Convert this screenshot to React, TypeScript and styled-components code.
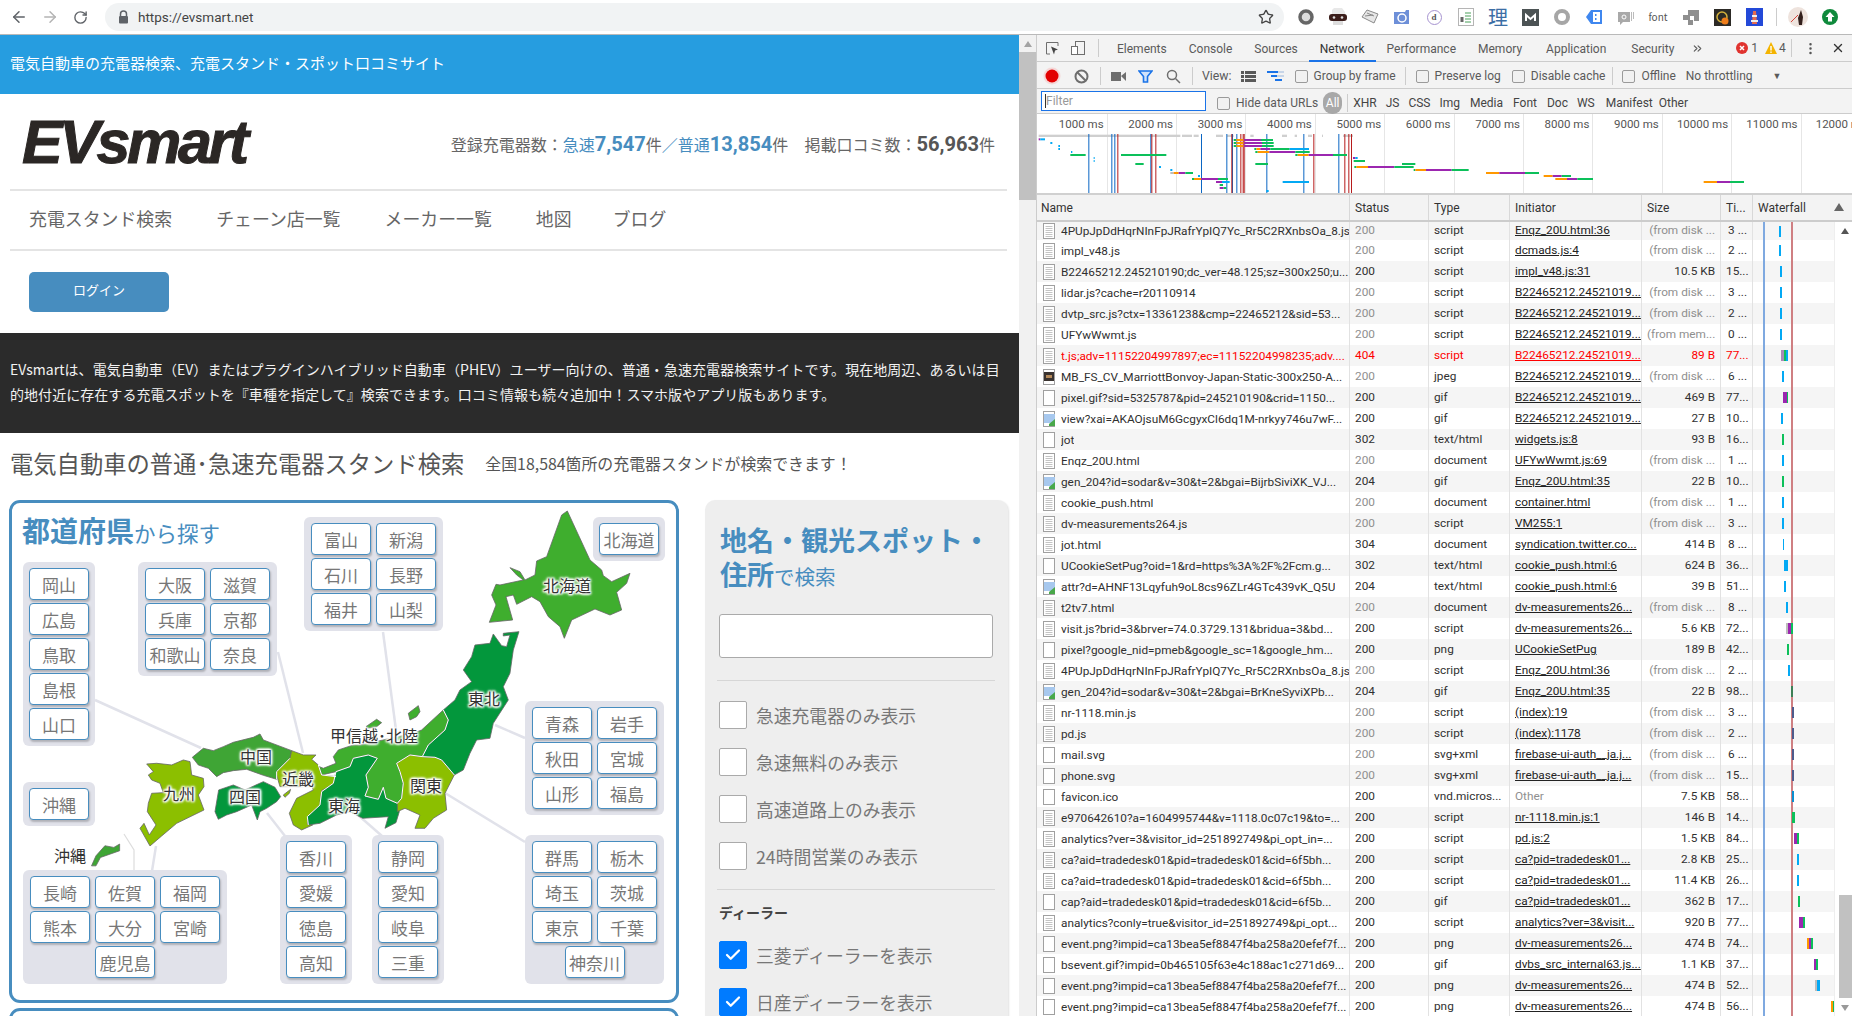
import React from 'react';
import styled, { createGlobalStyle, css } from 'styled-components';
import { ArrowLeft, ArrowRight, RotateCw, Star, ChevronsRight, MoreVertical, X, Check } from 'lucide-react';

const Global = createGlobalStyle`
  html, body { margin: 0; padding: 0; background: #fff; overflow: hidden; }
  * { box-sizing: border-box; }
  #root { height: 1016px; width: 1852px; overflow: hidden; font-family: Roboto, "Noto Sans CJK JP", sans-serif; }
`;

const BLUE = '#478dbf';
const PAGE_FONT = `"Noto Sans CJK JP", Roboto, sans-serif`;

/* ---------- browser chrome ---------- */
const Chrome = styled.header`
  height: 35px; border-bottom: 1px solid #b9b9b9; display: flex; align-items: center; background: #fff;
`;
const NavBtn = styled.span<{ $c?: string; $w: number }>`
  width: ${p => p.$w}px; display: flex; justify-content: center; color: ${p => p.$c || '#5f6368'};
`;
const UrlPill = styled.div`
  margin-left: 6px; width: 1179px; height: 28px; border-radius: 14px; background: #f1f3f4; display: flex; align-items: center;
  padding: 0 10px 0 13px; font-size: 13.5px; color: #444; gap: 9px;
`;
const UrlText = styled.span` flex: 1; `;
const Exts = styled.div` margin-left: 6px; display: flex; align-items: center; `;
const Ext = styled.span`
  width: 32px; height: 30px; display: flex; align-items: center; justify-content: center;
`;
const ExtText = styled.span<{ $c: string; $s: number }>`
  color: ${p => p.$c}; font-size: ${p => p.$s}px; line-height: 1; font-family: ${PAGE_FONT};
`;
const ExtBadge = styled.span`
  width: 15px; height: 15px; border: 1px solid #a693d0; border-radius: 50%; display: flex; align-items: center; justify-content: center;
  font: 700 9px "Liberation Serif", serif; color: #555;
`;
const ExtSep = styled.span` width: 1px; height: 18px; background: #ccc; margin: 0 5px 0 6px; `;

/* ---------- page ---------- */
const Main = styled.div` display: flex; height: 981px; `;
const Page = styled.main`
  width: 1019px; overflow: hidden; font-family: ${PAGE_FONT}; color: #555; background: #fff;
`;
const PageBar = styled.div`
  width: 17px; background: #f1f1f1; position: relative; flex: none;
  &::before { content: ''; position: absolute; left: 5px; top: 6px; border: 4px solid transparent; border-top: 0; border-bottom: 6px solid #a3a3a3; }
`;
const PageThumb = styled.div` margin-top: 17px; height: 148px; background: #c1c1c1; `;
const Banner = styled.div`
  height: 59px; background: #269de0; color: #fff; font-size: 15px; display: flex; align-items: center; padding: 0 0 4px 10px;
`;
const Masthead = styled.div`
  height: 97px; margin: 0 12px 0 10px; border-bottom: 2px solid #e4e4e4; display: flex; align-items: center; justify-content: space-between;
  padding: 0 12px 0 12px;
`;
const Logo = styled.div`
  font-family: "Liberation Sans", sans-serif; font-weight: 700; font-style: italic; font-size: 61px; letter-spacing: -3.4px; line-height: 1;
  color: #2b2725; -webkit-text-stroke: 1px #2b2725; padding-top: 1px;
`;
const Stats = styled.div` font-size: 16px; color: #666; display: flex; align-items: baseline; white-space: nowrap; padding-top: 4px; `;
const StatNum = styled.b<{ $dark?: boolean }>`
  font-family: Roboto, sans-serif; font-size: 20.1px; font-weight: 700; color: ${p => (p.$dark ? '#555' : BLUE)};
`;
const StatBlue = styled.span` color: ${BLUE}; `;
const StatGap = styled.span` width: 16px; `;
const Nav = styled.nav`
  height: 60px; margin: 0 12px 0 10px; border-bottom: 2px solid #e4e4e4; display: flex; align-items: center; gap: 44px; padding: 0 0 4px 19px;
  font-size: 17.9px; color: #666;
  span:last-child { margin-left: -3px; }
`;
const LoginRow = styled.div` height: 82px; padding: 21px 0 0 29px; `;
const Login = styled.button`
  width: 140px; height: 40px; border: 0; border-radius: 5px; background: ${BLUE}; color: #fff; font: 13px ${PAGE_FONT}; padding: 0 0 6px;
`;
const Intro = styled.p`
  margin: 0; height: 100px; background: #2b2b2b; color: #f2f2f2; font-size: 14px; line-height: 25px; padding: 24px 0 0 10px; letter-spacing: .05px; white-space: nowrap;
`;
const Heading = styled.div` height: 67px; padding: 0 0 7px 10px; display: flex; align-items: center; gap: 21px; `;
const H2 = styled.h2` margin: 0; font-size: 23.3px; font-weight: 400; color: #555; white-space: nowrap; `;
const H2Sub = styled.span` font-size: 15.9px; color: #555; white-space: nowrap; `;
const Panels = styled.div` display: flex; align-items: flex-start; padding-left: 9px; gap: 26px; `;
const Left = styled.div` width: 670px; `;

const MapPanel = styled.section`
  position: relative; height: 503px; border: 3px solid ${BLUE}; border-radius: 11px; background: #fff;
`;
const NextPanel = styled.div`
  height: 30px; margin-top: 5px; border: 3px solid ${BLUE}; border-radius: 11px;
`;
const MapTitle = styled.h3`
  margin: 0; position: absolute; left: 10px; top: 8px; color: ${BLUE}; font-size: 28px; font-weight: 700; white-space: nowrap; z-index: 2; line-height: 38px;
`;
const MapThin = styled.span` font-size: 21.5px; font-weight: 400; `;
const TitleThin = styled.span` font-size: 20.5px; font-weight: 400; `;
const MapArt = styled.svg` position: absolute; left: 0; top: 0; `;
const Group = styled.div<{ $x: number; $y: number; $cols: number }>`
  position: absolute; left: ${p => p.$x - 12}px; top: ${p => p.$y - 503}px; display: grid;
  grid-template-columns: repeat(${p => p.$cols}, 60px); gap: 3px 5px; padding: 6px 7px; background: #e1e2ea; border-radius: 6px;
  ${p => p.$cols === 1 && css` padding: 6px; `}
`;
const Pref = styled.a<{ $place?: string }>`
  height: 32px; background: #fff; border: 1.5px solid ${BLUE}; border-radius: 4px; box-shadow: 1px 2px 2px rgba(0,0,0,.22);
  display: flex; align-items: center; justify-content: center; font-size: 17px; color: #777; white-space: nowrap; line-height: 1;
  ${p => p.$place === 'center' && css` grid-column: 1 / -1; width: 60px; justify-self: center; `}
  ${p => p.$place === 'second' && css` grid-column: 2; `}
`;
const RegionLabel = styled.span<{ $x: number; $y: number }>`
  position: absolute; left: ${p => p.$x - 12}px; top: ${p => p.$y - 505}px; transform: translate(-50%, -50%); font-size: 16px; color: #333; white-space: nowrap; line-height: 1;
  text-shadow: 0 0 2px #fff, 0 0 3px #fff, 0 0 3px #fff, 0 0 4px #fff, 1px 1px 2px #fff, -1px -1px 2px #fff, 1px -1px 2px #fff, -1px 1px 2px #fff;
`;

const Side = styled.aside`
  width: 303px; height: 520px; background: #eee; border-radius: 10px 10px 0 0; padding: 23px 14px 0 14px; box-shadow: 1px 1px 2px rgba(0,0,0,.12);
`;
const SideTitle = styled.h3`
  margin: 0 0 21px 1px; font-size: 27px; line-height: 34px; color: ${BLUE}; font-weight: 700; white-space: nowrap;
`;
const SearchBox = styled.div` height: 44px; background: #fff; border: 1px solid #aaa; border-radius: 3px; width: 274px; `;
const Rule = styled.hr<{ $mt: number }>` margin: ${p => p.$mt}px 0 0 -2px; width: 278px; border: 0; border-top: 1px solid #d6d6d6; `;
const Opts = styled.div<{ $mt: number }>` margin-top: ${p => p.$mt}px; display: flex; flex-direction: column; gap: 19px; `;
const Opt = styled.label` display: flex; align-items: center; height: 28px; gap: 9px; font-size: 17.8px; color: #777; white-space: nowrap; `;
const OptBox = styled.span<{ $on?: boolean }>`
  width: 28px; height: 28px; flex: none; border-radius: 2px; display: flex; align-items: center; justify-content: center; color: #fff;
  background: ${p => (p.$on ? '#007bff' : '#fff')}; border: 1px solid ${p => (p.$on ? '#007bff' : '#aaa')};
`;
const DealerTitle = styled.div` margin-top: 12px; font-size: 14px; font-weight: 700; color: #444; line-height: 20px; `;

/* ---------- devtools ---------- */
const Dev = styled.section`
  width: 816px; flex: none; border-left: 1px solid #ccc; background: #fff; color: #5a5a5a; font-size: 12px; font-family: Roboto, "Noto Sans", sans-serif;
  display: flex; flex-direction: column; overflow: hidden;
`;
const DevBar = styled.div<{ $h: number; $pt?: number }>`
  height: ${p => p.$h}px; flex: none; display: flex; align-items: center; border-bottom: 1px solid #ccc; background: #f3f3f3; white-space: nowrap;
  padding-top: ${p => p.$pt ?? 0}px;
`;
const Cell = styled.span<{ $w: number; $ml?: number }>`
  width: ${p => p.$w}px; flex: none; display: flex; align-items: center; justify-content: center; margin-left: ${p => p.$ml ?? 0}px;
`;
const Sep = styled.span<{ $ml?: number; $mr?: number }>`
  width: 1px; height: 18px; background: #ccc; margin-left: ${p => p.$ml ?? 0}px; margin-right: ${p => p.$mr ?? 0}px; flex: none;
`;
const Tab = styled.span<{ $on?: boolean; $ml?: number }>`
  padding: 0 11px; height: 27px; line-height: 28px; flex: none; font-size: 12px; margin-left: ${p => p.$ml ?? 0}px;
  ${p => p.$on && css` color: #333; border-bottom: 2px solid #1a73e8; `}
`;
const Txt = styled.span<{ $ml?: number; $c?: string; $s?: number }>`
  margin-left: ${p => p.$ml ?? 0}px; flex: none; ${p => p.$c && css` color: ${p.$c}; `} ${p => p.$s && css` font-size: ${p.$s}px; `}
`;
const Cb = styled.span<{ $ml?: number }>`
  width: 13px; height: 13px; flex: none; border: 1px solid #9a9a9a; border-radius: 2px; background: #f1f1f1; margin-left: ${p => p.$ml ?? 0}px; margin-right: 6px;
`;
const FilterInput = styled.span`
  margin: -4px 0 0 4px; width: 165px; height: 20px; border: 1px solid #1a73e8; background: #fff; color: #999; padding-left: 4px; line-height: 18px; flex: none;
  box-shadow: inset 1px 0 0 #fff; position: relative;
  &::before { content: ''; position: absolute; left: 3px; top: 2px; height: 14px; width: 1px; background: #333; }
`;
const Pill = styled.span`
  margin-left: 5px; width: 19px; height: 22px; border-radius: 9px; background: #a8a8a8; color: #fff; text-align: center; line-height: 22px; flex: none;
`;
const FilterType = styled.span<{ $ml: number }>` margin-left: ${p => p.$ml}px; flex: none; color: #444; `;

const Overview = styled.div` height: 81px; flex: none; position: relative; border-bottom: 2px solid #d0d0d0; display: flex; padding-left: 1px; overflow: hidden; `;
const Tick = styled.div<{ $w: number }>`
  width: ${p => p.$w}px; flex: none; border-right: 1px solid #e6e6e6; padding: 3px 3px 0 0; font-size: 11.5px; color: #555; white-space: nowrap; height: 80px;
  display: flex; justify-content: flex-end;
`;
const OverviewChart = styled.svg` position: absolute; left: 0; top: 16px; `;

const COLS = css` display: grid; grid-template-columns: 313px 79px 81px 132px 79px 32px 81px; `;
const HeadRow = styled.div`
  height: 27px; flex: none; background: #f3f3f3; border-bottom: 2px solid #ccc; display: grid; grid-template-columns: 313px 79px 81px 132px 79px 32px 99px;
  color: #333;
`;
const HeadCell = styled.div`
  padding-left: 5px; line-height: 27px; border-right: 1px solid #d8d8d8; overflow: hidden; white-space: nowrap; position: relative;
  &:first-child { padding-left: 4px; }
  &:last-child { border-right: 0; }
`;
const SortArrow = styled.span`
  position: absolute; right: 8px; top: 8px; border: 5px solid transparent; border-top: 0; border-bottom: 8px solid #666;
`;
const TableWrap = styled.div` flex: 1; display: flex; min-height: 0; overflow: hidden; `;
const Rows = styled.div` width: 797px; flex: none; font-size: 11.8px; `;
const Row = styled.div<{ $alt: boolean; $short?: boolean; $err?: boolean }>`
  ${COLS}
  height: ${p => (p.$short ? 18 : 21)}px; background: ${p => (p.$alt ? '#f5f5f5' : '#fff')}; color: ${p => (p.$err ? '#f00' : '#303030')}; line-height: ${p => (p.$short ? 16 : 20)}px;
`;
const TCell = styled.div<{ $gray?: boolean; $right?: boolean; $link?: boolean; $err?: boolean }>`
  padding: 0 5px; border-right: 1px solid #e2e2e2; overflow: hidden; white-space: nowrap;
  ${p => p.$gray && css` color: #8f8f8f; `}
  ${p => p.$right && css` text-align: right; `}
  ${p => p.$link && css` text-decoration: underline; color: ${p.$err ? '#f00' : '#222'}; `}
`;
const NameCell = styled(TCell)` padding: 0 0 0 6px; display: flex; align-items: center; gap: 5px; `;
const NameText = styled.span` overflow: hidden; `;
const Waterfall = styled.div`
  position: relative; overflow: hidden;
  &::before { content: ''; position: absolute; left: 10px; top: 0; bottom: 0; width: 2px; background: #7fa9e0; }
  &::after { content: ''; position: absolute; left: 38px; top: 0; bottom: 0; width: 2px; background: #cf7f82; }
`;
const Bar = styled.i`
  position: absolute; top: 50%; height: 11px; margin-top: -5.5px; z-index: 1;
`;
const DevScroll = styled.div` width: 18px; flex: none; background: #fff; border-left: 1px solid #eee; position: relative; `;
const ThumbDev = styled.div` position: absolute; left: 4px; right: 0; top: 673px; height: 103px; background: #c1c1c1; `;
const ArrowUp = styled.span` position: absolute; left: 6px; top: 6px; border: 4px solid transparent; border-top: 0; border-bottom: 6px solid #555; `;
const ArrowDown = styled.span` position: absolute; left: 6px; bottom: 5px; border: 4px solid transparent; border-bottom: 0; border-top: 6px solid #999; `;

/* ---------- data ---------- */
type BarT = [number, number, string];
const g = '#0cc05a', b = '#03a9f4', p = '#9c27b0', o = '#ff9800', n = '#4d5b8c', y = '#bdbdbd';
type R = { n: string; ic: 'doc' | 'blank' | 'img' | 'jpg'; s: string; sg?: boolean; t: string; i: string; il?: boolean; z: string; zg?: boolean; m: string; e?: boolean; w: BarT[] };
const disk = '(from disk ...';
const B22 = 'B22465212.24521019...';
const DV = 'dv-measurements26...';
const data: R[] = [
  { n: '4PUpJpDdHqrNInFpJRafrYpIQ7Yc_Rr5C2RXnbsOa_8.js', ic: 'doc', s: '200', sg: true, t: 'script', i: 'Enqz_20U.html:36', z: disk, zg: true, m: '3 ...', w: [[1778.6, 2, b]] },
  { n: 'impl_v48.js', ic: 'doc', s: '200', sg: true, t: 'script', i: 'dcmads.js:4', z: disk, zg: true, m: '2 ...', w: [[1778.6, 2, b]] },
  { n: 'B22465212.245210190;dc_ver=48.125;sz=300x250;u...', ic: 'doc', s: '200', t: 'script', i: 'impl_v48.js:31', z: '10.5 KB', m: '15...', w: [[1780, 2, b]] },
  { n: 'lidar.js?cache=r20110914', ic: 'doc', s: '200', sg: true, t: 'script', i: B22, z: disk, zg: true, m: '3 ...', w: [[1780, 2, b]] },
  { n: 'dvtp_src.js?ctx=13361238&cmp=22465212&sid=53...', ic: 'doc', s: '200', sg: true, t: 'script', i: B22, z: disk, zg: true, m: '2 ...', w: [[1780, 2, b]] },
  { n: 'UFYwWwmt.js', ic: 'doc', s: '200', sg: true, t: 'script', i: B22, z: '(from mem...', zg: true, m: '0 ...', w: [[1780, 2, b]] },
  { n: 't.js;adv=11152204997897;ec=11152204998235;adv....', ic: 'doc', s: '404', e: true, t: 'script', i: B22, z: '89 B', m: '77...', w: [[1781, 3, '#a989b5'], [1784, 2, g], [1786, 2, b]] },
  { n: 'MB_FS_CV_MarriottBonvoy-Japan-Static-300x250-A...', ic: 'jpg', s: '200', sg: true, t: 'jpeg', i: B22, z: disk, zg: true, m: '6 ...', w: [[1781.5, 2, b]] },
  { n: 'pixel.gif?sid=5325787&pid=245210190&crid=1150...', ic: 'blank', s: '200', t: 'gif', i: B22, z: '469 B', m: '77...', w: [[1783, 4, p], [1787, 1, g]] },
  { n: 'view?xai=AKAOjsuM6GcgyxCl6dq1M-nrkyy746u7wF...', ic: 'img', s: '200', t: 'gif', i: B22, z: '27 B', m: '10...', w: [[1781, 2, b]] },
  { n: 'jot', ic: 'blank', s: '302', t: 'text/html', i: 'widgets.js:8', z: '93 B', m: '16...', w: [[1782, 1.5, g]] },
  { n: 'Enqz_20U.html', ic: 'doc', s: '200', sg: true, t: 'document', i: 'UFYwWwmt.js:69', z: disk, zg: true, m: '1 ...', w: [[1781.5, 2, b]] },
  { n: 'gen_204?id=sodar&v=30&t=2&bgai=BijrbSiviXK_VJ...', ic: 'img', s: '204', t: 'gif', i: 'Enqz_20U.html:35', z: '22 B', m: '10...', w: [[1782, 1.5, g]] },
  { n: 'cookie_push.html', ic: 'doc', s: '200', sg: true, t: 'document', i: 'container.html', z: disk, zg: true, m: '1 ...', w: [[1781.5, 2, b]] },
  { n: 'dv-measurements264.js', ic: 'doc', s: '200', sg: true, t: 'script', i: 'VM255:1', z: disk, zg: true, m: '3 ...', w: [[1781.5, 2, b]] },
  { n: 'jot.html', ic: 'doc', s: '304', t: 'document', i: 'syndication.twitter.co...', z: '414 B', m: '8 ...', w: [[1782.5, 1.5, b]] },
  { n: 'UCookieSetPug?oid=1&rd=https%3A%2F%2Fcm.g...', ic: 'blank', s: '302', t: 'text/html', i: 'cookie_push.html:6', z: '624 B', m: '36...', w: [[1784, 4, b]] },
  { n: 'attr?d=AHNF13Lqyfuh9oL8cs96ZLr4GTc439vK_Q5U', ic: 'img', s: '204', t: 'text/html', i: 'cookie_push.html:6', z: '39 B', m: '51...', w: [[1784, 2, b]] },
  { n: 't2tv7.html', ic: 'doc', s: '200', sg: true, t: 'document', i: DV, z: disk, zg: true, m: '8 ...', w: [[1786, 2, b]] },
  { n: 'visit.js?brid=3&brver=74.0.3729.131&bridua=3&bd...', ic: 'doc', s: '200', t: 'script', i: DV, z: '5.6 KB', m: '72...', w: [[1785.5, 3, y], [1787.5, 3, p], [1790.5, 2, g]] },
  { n: 'pixel?google_nid=pmeb&google_sc=1&google_hm...', ic: 'blank', s: '200', t: 'png', i: 'UCookieSetPug', z: '189 B', m: '42...', w: [[1787, 1.5, g]] },
  { n: '4PUpJpDdHqrNInFpJRafrYpIQ7Yc_Rr5C2RXnbsOa_8.js', ic: 'doc', s: '200', sg: true, t: 'script', i: 'Enqz_20U.html:36', z: disk, zg: true, m: '2 ...', w: [[1788, 2, b]] },
  { n: 'gen_204?id=sodar&v=30&t=2&bgai=BrKneSyviXPb...', ic: 'img', s: '204', t: 'gif', i: 'Enqz_20U.html:35', z: '22 B', m: '98...', w: [[1791, 2, '#3d7f55']] },
  { n: 'nr-1118.min.js', ic: 'doc', s: '200', sg: true, t: 'script', i: '(index):19', z: disk, zg: true, m: '3 ...', w: [[1791.5, 2, n]] },
  { n: 'pd.js', ic: 'doc', s: '200', sg: true, t: 'script', i: '(index):1178', z: disk, zg: true, m: '2 ...', w: [[1791.5, 2, n]] },
  { n: 'mail.svg', ic: 'blank', s: '200', sg: true, t: 'svg+xml', i: 'firebase-ui-auth__ja.j...', z: disk, zg: true, m: '6 ...', w: [[1791.5, 2, n]] },
  { n: 'phone.svg', ic: 'blank', s: '200', sg: true, t: 'svg+xml', i: 'firebase-ui-auth__ja.j...', z: disk, zg: true, m: '15...', w: [[1791.5, 2, n]] },
  { n: 'favicon.ico', ic: 'blank', s: '200', t: 'vnd.micros...', i: 'Other', il: true, z: '7.5 KB', m: '58...', w: [[1792, 2, '#0a8fd0']] },
  { n: 'e970642610?a=1604995744&v=1118.0c07c19&to=...', ic: 'doc', s: '200', t: 'script', i: 'nr-1118.min.js:1', z: '146 B', m: '14...', w: [[1792, 3, g]] },
  { n: 'analytics?ver=3&visitor_id=251892749&pi_opt_in=...', ic: 'doc', s: '200', t: 'script', i: 'pd.js:2', z: '1.5 KB', m: '84...', w: [[1794, 3, p], [1797, 2, g]] },
  { n: 'ca?aid=tradedesk01&pid=tradedesk01&cid=6f5bh...', ic: 'doc', s: '200', t: 'script', i: 'ca?pid=tradedesk01...', z: '2.8 KB', m: '25...', w: [[1797, 2, b]] },
  { n: 'ca?aid=tradedesk01&pid=tradedesk01&cid=6f5bh...', ic: 'doc', s: '200', t: 'script', i: 'ca?pid=tradedesk01...', z: '11.4 KB', m: '26...', w: [[1797, 2, b]] },
  { n: 'cap?aid=tradedesk01&pid=tradedesk01&cid=6f5b...', ic: 'blank', s: '200', t: 'gif', i: 'ca?pid=tradedesk01...', z: '362 B', m: '17...', w: [[1798, 1.5, g]] },
  { n: 'analytics?conly=true&visitor_id=251892749&pi_opt...', ic: 'doc', s: '200', t: 'script', i: 'analytics?ver=3&visit...', z: '920 B', m: '77...', w: [[1799, 4, p], [1803, 2, g]] },
  { n: 'event.png?impid=ca13bea5ef8847f4ba258a20efef7f...', ic: 'blank', s: '200', t: 'png', i: DV, z: '474 B', m: '74...', w: [[1807, 2, o], [1809, 2, p], [1811, 2, g]] },
  { n: 'bsevent.gif?impid=0b465105f63e4c188ac1c271d69...', ic: 'blank', s: '200', t: 'gif', i: 'dvbs_src_internal63.js...', z: '1.1 KB', m: '37...', w: [[1814, 2, p], [1815.5, 2, g]] },
  { n: 'event.png?impid=ca13bea5ef8847f4ba258a20efef7f...', ic: 'blank', s: '200', t: 'png', i: DV, z: '474 B', m: '52...', w: [[1815, 2, y], [1817, 3, b]] },
  { n: 'event.png?impid=ca13bea5ef8847f4ba258a20efef7f...', ic: 'blank', s: '200', t: 'png', i: DV, z: '474 B', m: '56...', w: [[1831, 3, o], [1833, 1, g]] },
];

const FileIcon = ({ k }: { k: R['ic'] }) => (
  <svg width="13" height="16" viewBox="0 0 13 16" style={{ flex: 'none' }}>
    <rect x=".5" y=".5" width="11" height="15" fill="#fff" stroke="#a0a0a0" />
    {k === 'doc' && [3, 5, 7, 9, 11, 13].map(v => <rect key={v} x="2.5" y={v} width="7" height="1" fill="#c4c4c4" />)}
    {k === 'img' && <><rect x="1" y="3" width="11" height="9" fill="#a7c8ee" /><path d="M6 13l6-5v7H6z" fill="#49a84a" /></>}
    {k === 'jpg' && <><rect x="1" y="3" width="10" height="9" fill="#3a3330" /><rect x="3" y="6" width="6" height="3" fill="#b58a5a" /></>}
  </svg>
);

const groups: { x: number; y: number; cols: number; items: string[]; last?: string }[] = [
  { x: 23, y: 562, cols: 1, items: ['岡山', '広島', '鳥取', '島根', '山口'] },
  { x: 138, y: 562, cols: 2, items: ['大阪', '滋賀', '兵庫', '京都', '和歌山', '奈良'] },
  { x: 304, y: 517, cols: 2, items: ['富山', '新潟', '石川', '長野', '福井', '山梨'] },
  { x: 593, y: 517, cols: 1, items: ['北海道'] },
  { x: 23, y: 782, cols: 1, items: ['沖縄'] },
  { x: 23, y: 870, cols: 3, items: ['長崎', '佐賀', '福岡', '熊本', '大分', '宮崎', '鹿児島'], last: 'second' },
  { x: 280, y: 835, cols: 1, items: ['香川', '愛媛', '徳島', '高知'] },
  { x: 372, y: 835, cols: 1, items: ['静岡', '愛知', '岐阜', '三重'] },
  { x: 525, y: 835, cols: 2, items: ['群馬', '栃木', '埼玉', '茨城', '東京', '千葉', '神奈川'], last: 'center' },
  { x: 525, y: 701, cols: 2, items: ['青森', '岩手', '秋田', '宮城', '山形', '福島'] },
];
const labels: [string, number, number][] = [
  ['北海道', 567, 587], ['東北', 484, 700], ['甲信越･北陸', 374, 737], ['中国', 256, 758], ['近畿', 298, 780],
  ['九州', 179, 795], ['四国', 245, 798], ['東海', 344, 807], ['関東', 426, 787], ['沖縄', 70, 857],
];

const LIME = '#8cbf00', MID = '#3fae2e', DARK = '#03973c', MID2 = '#3fa535';
const regions: [string, string][] = [
  [MID2, '217,772 250,745 280,752 310,740 340,727 400,712 420,702 430,720 515,752 510,775 470,815 470,838 430,826 380,808 340,812 310,818 290,830 265,805 235,795'],
  [DARK, '296,870 340,855 375,870 430,845 465,862 482,890 470,905 440,925 420,935 412,960 395,915 350,935 320,945 295,958 285,935'],
  [LIME, '80,792 110,790 155,795 190,780 210,785 215,825 250,835 252,860 235,885 252,930 170,970 125,1008 90,1038 60,985 72,970 88,1005 108,975 82,935 85,910 95,880 130,878 120,850 95,840 85,825 100,815'],
  [LIME, '470,815 510,775 515,752 550,765 588,765 575,778 595,795 605,825 648,830 640,852 605,872 600,905 608,912 585,935 565,950 562,972 578,975 545,990 520,975 508,940 530,895 580,870 575,860 480,860 470,825'],
  [LIME, '490,885 512,868 508,880 495,892'],
  [MID, '605,825 598,800 610,805 648,790 640,770 655,750 700,735 720,735 880,700 905,690 970,630 985,660 975,690 925,735 907,770 870,765 830,790 840,815 850,850 845,895 832,910 798,895 790,862 775,898 735,888 745,862 738,825 772,775 745,765 700,775 690,800 648,815'],
  [MID, '865,640 895,617 900,635 890,650 870,660'],
  [MID, '738,680 770,658 785,668 770,680 745,685'],
  [DARK, '648,815 690,800 700,775 745,765 772,775 738,825 745,862 735,888 775,898 790,862 798,895 832,910 838,935 828,968 795,985 805,950 728,955 690,935 650,945 600,970 565,975 562,950 600,915 605,875 640,850'],
  [LIME, '830,790 870,765 907,770 945,772 965,780 1003,825 975,880 980,930 940,955 915,985 885,985 900,945 855,925 832,935 832,910 845,895 850,850 840,815'],
  [DARK, '1120,402 1145,437 1160,440 1170,405 1150,408 1150,400 1197,395 1180,450 1170,520 1150,560 1165,600 1120,670 1110,715 1070,720 1050,760 1030,810 1003,825 965,780 945,772 907,770 925,735 975,690 985,660 970,630 1005,600 1020,570 1055,545 1030,510 1055,470 1065,435 1110,430'],
];
const seams = [
  '510,775 470,815 470,838', '648,830 605,825 595,795', '648,815 640,850 605,875 600,915 562,950 565,975',
  '648,815 690,800 700,775 745,765 772,775 738,825 745,862 735,888 775,898 790,862 798,895 832,910', '832,910 845,895 850,850 840,815 830,790 870,765 907,770',
  '907,770 925,735 975,690 985,660 970,630', '907,770 945,772 965,780 1003,825',
];
const HOKKAIDO = '262,18 330,165 365,195 370,212 395,230 450,205 440,235 410,262 425,315 390,330 345,312 275,345 253,400 240,365 205,335 180,290 155,275 110,298 100,270 78,275 98,345 28,352 48,300 35,270 48,238 60,240 130,225 110,210 90,188 120,200 135,225 165,210 170,168 200,155 245,30';
const lines: string[] = [
  '95,700 201,748', '278,652 303,753', '383,632 396,730', '495,725 525,738', '445,793 525,842', '267,813 285,836', '358,815 382,836', '156,846 152,871',
];

const JapanMap = () => (
  <MapArt width="664" height="497" viewBox="12 503 664 497">
    <g fill="none" stroke="#e1e2ea" strokeWidth="2.5">
      {lines.map(l => <polyline key={l} points={l} />)}
      <polyline points="124,834 134,850 134,871" stroke="#ddd" strokeWidth="1.2" />
    </g>
    <g transform="translate(120,500) scale(.3333)">
      <g stroke="#666" strokeWidth="2.4" strokeLinejoin="round">
        {regions.map(([c, pts]) => <polygon key={pts} fill={c} points={pts} />)}
      </g>
      <g fill="none" stroke="#fff" strokeWidth="3">
        {seams.map(s => <polyline key={s} points={s} />)}
      </g>
    </g>
    <g transform="translate(480,505) scale(.3333)">
      <polygon fill={MID} stroke="#666" strokeWidth="2.4" strokeLinejoin="round" points={HOKKAIDO} />
    </g>
    <g transform="translate(0,490) scale(.4464,.3356)">
      <polygon fill={MID2} stroke="#666" strokeWidth="2" points="205,1120 215,1090 235,1060 255,1065 268,1055 268,1075 225,1095 215,1120" />
    </g>
  </MapArt>
);

/* overview chart, units are 1/3 px */
const segs: [number, number, number, string][] = [
  [5, 10, 25, p], [10, 24, 25, b], [40, 46, 36, b], [64, 69, 45, b], [64, 69, 54, b], [102, 106, 63, b], [100, 146, 72, g], [252, 388, 72, g],
  [170, 173, 81, b], [170, 173, 90, b], [295, 320, 99, g], [366, 372, 108, b], [400, 406, 117, b], [400, 410, 126, y], [410, 425, 126, o], [425, 445, 126, p], [445, 468, 126, g],
  [483, 489, 135, b], [465, 471, 144, g], [471, 492, 144, o], [492, 543, 144, p], [543, 573, 144, g], [537, 555, 153, p], [555, 578, 153, b], [548, 558, 162, g], [548, 560, 171, p], [560, 568, 171, g],
  [590, 598, 27, g], [598, 620, 27, o], [620, 672, 27, p], [672, 708, 27, g], [590, 598, 36, g], [598, 620, 36, o], [620, 675, 36, p], [675, 710, 36, g], [590, 598, 45, g], [598, 620, 45, o], [620, 675, 45, p], [675, 710, 45, g],
  [652, 658, 54, g], [658, 670, 54, o], [670, 700, 54, p], [700, 758, 54, g], [758, 816, 54, b], [655, 662, 63, g], [662, 697, 63, o], [697, 775, 63, p], [775, 818, 63, g],
  [775, 782, 72, g], [782, 815, 72, o], [815, 888, 72, p], [888, 930, 72, g], [948, 955, 81, p], [955, 962, 81, b], [950, 984, 90, g], [655, 693, 99, g], [1095, 1135, 99, g],
  [952, 958, 108, g], [958, 993, 108, o], [993, 1072, 108, p], [1072, 1130, 108, g], [1130, 1135, 117, g], [1135, 1167, 117, o], [1167, 1244, 117, p], [1244, 1295, 117, g],
  [1347, 1387, 126, o], [1387, 1464, 126, p], [1464, 1506, 126, g], [1520, 1547, 135, o], [1547, 1574, 135, p], [1574, 1602, 135, g], [1555, 1590, 144, o], [1590, 1621, 144, p], [1621, 1668, 144, g],
  [737, 816, 153, b], [2000, 2040, 153, o], [2040, 2079, 153, p], [2079, 2121, 153, g], [688, 695, 180, b],
];
const grays: [number, number][] = [[5, 430], [435, 465], [470, 485], [537, 558], [570, 590], [640, 650], [735, 750], [773, 780], [813, 825], [855, 858], [918, 948]];
const vBlue = [154, 223, 232, 340, 492, 568, 585, 598, 688, 799, 904];
const vRed = [241, 343, 355, 583, 610, 617, 620, 829, 922, 934, 942];

const OverviewArt = () => (
  <OverviewChart width="816" height="64" viewBox="0 0 2448 192">
    {grays.map(([a, c]) => <rect key={a} x={a} y="14" width={c - a} height="7" fill="#cfcfcf" />)}
    {vBlue.map(v => <rect key={v} x={v} y="12" width="3" height="180" fill="#0b66c3" />)}
    {vRed.map(v => <rect key={v} x={v} y="12" width="3" height="180" fill="#b71c1c" />)}
    {segs.map(([a, c, yy, col]) => <rect key={`${a}-${yy}`} x={a} y={yy} width={c - a} height="6" fill={col} />)}
  </OverviewChart>
);

const Lock = () => (
  <svg width="11" height="14" viewBox="0 0 11 14"><path d="M2.5 6V4a3 3 0 016 0v2" fill="none" stroke="#5f6368" strokeWidth="1.5" /><rect x="1" y="6" width="9" height="7.5" rx="1" fill="#5f6368" /></svg>
);

const ExtIcons = () => (
  <Exts>
    <Ext><svg width="18" height="18"><circle cx="9" cy="9" r="6" fill="#ddd" stroke="#666" strokeWidth="3.5" /></svg></Ext>
    <Ext><svg width="20" height="18"><path d="M6 0h8l3 4v5H4V2z" fill="#e8e8e8" /><rect x="1" y="6" width="18" height="7" rx="3" fill="#3b1d1a" /><circle cx="6" cy="9.5" r="1.3" fill="#ddd" /><circle cx="14" cy="9.5" r="1.3" fill="#ddd" /><rect x="5" y="13" width="10" height="4" fill="#ddd" /></svg></Ext>
    <Ext><svg width="18" height="18"><path d="M1 9l5-7 11 4-4 9z" fill="#e6e6e6" stroke="#8a8a8a" /><path d="M4 8l8-1M6 5l7 3" stroke="#888" /></svg></Ext>
    <Ext><svg width="18" height="18"><path d="M1 4h11l1-2h3v14H1z" fill="#6d8fd8" /><circle cx="9" cy="10" r="4" fill="none" stroke="#fff" strokeWidth="1.5" /></svg></Ext>
    <Ext><ExtBadge>d</ExtBadge></Ext>
    <Ext><svg width="16" height="18"><rect x=".5" y=".5" width="15" height="17" fill="#fff" stroke="#b5b5b5" /><path d="M7 5h6M7 8h6M7 11h6M7 14h6" stroke="#4aa05a" /><rect x="2.5" y="9" width="3" height="5" fill="#666" /></svg></Ext>
    <Ext><ExtText $c="#3c6ea5" $s={20}>理</ExtText></Ext>
    <Ext><svg width="17" height="17"><rect width="17" height="17" fill="#4c5354" /><path d="M4 12V6l4.5 4L13 6v6" fill="none" stroke="#fff" strokeWidth="2" /></svg></Ext>
    <Ext><svg width="18" height="18"><circle cx="9" cy="9" r="6" fill="#fff" stroke="#a6a6a6" strokeWidth="4" /></svg></Ext>
    <Ext><svg width="18" height="16"><path d="M6 1h11v14H6L1 8z" fill="#3f87ef" /><rect x="8" y="3" width="7" height="10" fill="#fff" /><rect x="10" y="5" width="1.5" height="2" fill="#3f87ef" /><rect x="10" y="9" width="1.5" height="2" fill="#3f87ef" /></svg></Ext>
    <Ext><svg width="18" height="17"><path d="M1 3h12v10H6l-3 3v-3H1z" fill="#a9a9a9" /><path d="M14 3h1v9h-1zM16 3h1v7h-1z" fill="#bbb" /><circle cx="7" cy="8" r="2" fill="none" stroke="#fff" /></svg></Ext>
    <Ext><ExtText $c="#555" $s={10}>font</ExtText></Ext>
    <Ext><svg width="17" height="17"><path d="M1 6h5V1h11v11h-5V7H8v4H1z" fill="#8f8f8f" /><rect x="6" y="11" width="5" height="5" fill="#8f8f8f" /></svg></Ext>
    <Ext><svg width="17" height="17"><rect width="17" height="17" fill="#2c2a26" /><circle cx="8" cy="8" r="5" fill="none" stroke="#d4b13c" strokeWidth="1.5" /><circle cx="11" cy="12" r="3.5" fill="#ef7d1a" /></svg></Ext>
    <Ext><svg width="17" height="18"><rect width="17" height="18" fill="#2349d8" /><path d="M7 3h3l1 13H6z" fill="#e56a4e" /><rect x="6" y="7" width="5" height="2" fill="#eee" /><rect x="5" y="12" width="7" height="2" fill="#eee" /></svg></Ext>
    <ExtSep />
    <Ext><svg width="20" height="20"><circle cx="10" cy="10" r="10" fill="#eee3dd" /><path d="M13 3l2 7-1 8h-3l-1-7z" fill="#33201c" /><path d="M3 15l7-7" stroke="#d5453a" /></svg></Ext>
    <Ext><svg width="18" height="18"><circle cx="9" cy="9" r="8" fill="#0f8a3c" /><path d="M9 4l4.5 5H11v4.5H7V9H4.5z" fill="#fff" /></svg></Ext>
  </Exts>
);

const DevTabs = () => (
  <DevBar $h={27}>
    <Cell $w={30}><svg width="15" height="15" fill="none" stroke="#6e6e6e"><path d="M5 13H1.5V1.5H13V5" /><path d="M6 5.5l7 3-3 1-1 4z" fill="#444" stroke="none" /></svg></Cell>
    <Cell $w={22}><svg width="16" height="16" fill="none" stroke="#6e6e6e"><rect x="5.5" y="1.5" width="9" height="13" /><rect x="1.5" y="6.5" width="6" height="8" fill="#fff" /></svg></Cell>
    <Sep $ml={9} $mr={7} />
    {['Elements', 'Console', 'Sources'].map(t => <Tab key={t}>{t}</Tab>)}
    <Tab $on>Network</Tab>
    <Tab>Performance</Tab>
    <Tab>Memory</Tab>
    <Tab $ml={2}>Application</Tab>
    <Tab $ml={3}>Security</Tab>
    <Cell $w={24}><ChevronsRight size={13} /></Cell>
    <Cell $w={28} $ml={19}>
      <svg width="12" height="12"><circle cx="6" cy="6" r="6" fill="#e0332f" /><path d="M4 4l4 4M8 4l-4 4" stroke="#fff" strokeWidth="1.5" /></svg>
    </Cell>
    <Txt $ml={-5}>1</Txt>
    <Cell $w={26}><svg width="12" height="12"><path d="M6 0l6 12H0z" fill="#f4b400" /><rect x="5.3" y="4" width="1.4" height="4.5" fill="#fff" /><rect x="5.3" y="9.5" width="1.4" height="1.4" fill="#fff" /></svg></Cell>
    <Txt $ml={-5}>4</Txt>
    <Sep $ml={5} />
    <Cell $w={38}><MoreVertical size={15} color="#555" /></Cell>
    <Cell $w={16}><X size={14} color="#333" strokeWidth={2.4} /></Cell>
  </DevBar>
);

const DevTools = () => (
  <DevBar $h={27} $pt={2}>
    <Cell $w={30}><svg width="18" height="18"><circle cx="9" cy="9" r="8.5" fill="#f7bcbc" opacity=".5" /><circle cx="9" cy="9" r="6.5" fill="#e20000" /></svg></Cell>
    <Cell $w={28}><svg width="15" height="15" fill="none" stroke="#6e6e6e" strokeWidth="2"><circle cx="7.5" cy="7.5" r="6" /><path d="M3.5 3.5l8 8" /></svg></Cell>
    <Sep $ml={5} $mr={4} />
    <Cell $w={26}><svg width="15" height="11"><rect y="1" width="10" height="9" fill="#6e6e6e" /><path d="M10 5l5-4v9z" fill="#6e6e6e" /></svg></Cell>
    <Cell $w={29}><svg width="15" height="13"><path d="M1 1h13L9.5 6.5V12h-4V6.5z" fill="#cfe2fb" stroke="#1a73e8" strokeWidth="1.6" /></svg></Cell>
    <Cell $w={26}><svg width="15" height="15" fill="none" stroke="#6e6e6e" strokeWidth="1.5"><circle cx="6" cy="6" r="4.5" /><path d="M9.5 9.5l4.5 4.5" /></svg></Cell>
    <Sep $ml={6} $mr={5} />
    <Txt $ml={4} $s={12.3}>View:</Txt>
    <Cell $w={26} $ml={4}><svg width="15" height="11" fill="#5a5a5a"><rect width="3" height="3" /><rect x="4" width="11" height="3" /><rect y="4" width="3" height="3" /><rect x="4" y="4" width="11" height="3" /><rect y="8" width="3" height="3" /><rect x="4" y="8" width="11" height="3" /></svg></Cell>
    <Cell $w={28}><svg width="17" height="11"><rect width="11" height="2" fill="#1a73e8" /><rect x="11" width="6" height="2" fill="#c7d5e8" /><rect x="4" y="4" width="6" height="2" fill="#1a73e8" /><rect x="10" y="4" width="7" height="2" fill="#c7d5e8" /><rect x="8" y="8" width="7" height="2" fill="#1a73e8" /></svg></Cell>
    <Cb $ml={5} />
    <Txt>Group by frame</Txt>
    <Sep $ml={9} $mr={10} />
    <Cb />
    <Txt>Preserve log</Txt>
    <Cb $ml={11} />
    <Txt>Disable cache</Txt>
    <Sep $ml={7} $mr={9} />
    <Cb />
    <Txt>Offline</Txt>
    <Txt $ml={10}>No throttling</Txt>
    <Txt $ml={20} $s={9}>▼</Txt>
  </DevBar>
);

const DevFilter = () => (
  <DevBar $h={25} $pt={4}>
    <FilterInput>Filter</FilterInput>
    <Cb $ml={11} />
    <Txt>Hide data URLs</Txt>
    <Pill>All</Pill>
    <Sep $ml={5} />
    {([['XHR', 5], ['JS', 9], ['CSS', 9], ['Img', 9], ['Media', 10], ['Font', 10], ['Doc', 10], ['WS', 9], ['Manifest', 11], ['Other', 6]] as [string, number][]).map(([t, m]) => (
      <FilterType key={t} $ml={m}>{t}</FilterType>
    ))}
  </DevBar>
);

const ticks = ['1000 ms', '2000 ms', '3000 ms', '4000 ms', '5000 ms', '6000 ms', '7000 ms', '8000 ms', '9000 ms', '10000 ms', '11000 ms', '12000 ms'];
const heads = ['Name', 'Status', 'Type', 'Initiator', 'Size', 'Ti...'];

export default function App() {
  return (
    <>
      <Global />
      <Chrome>
        <NavBtn $w={38}><ArrowLeft size={18} /></NavBtn>
        <NavBtn $w={24} $c="#b4b4b4"><ArrowRight size={18} /></NavBtn>
        <NavBtn $w={37}><RotateCw size={15} strokeWidth={2.2} /></NavBtn>
        <UrlPill>
          <Lock />
          <UrlText>https://evsmart.net</UrlText>
          <Star size={16} color="#444" />
        </UrlPill>
        <ExtIcons />
      </Chrome>
      <Main>
        <Page>
          <Banner>電気自動車の充電器検索、充電スタンド・スポット口コミサイト</Banner>
          <Masthead>
            <Logo>EVsmart</Logo>
            <Stats>
              登録充電器数：<StatBlue>急速</StatBlue><StatNum>7,547</StatNum>件<StatBlue>／普通</StatBlue><StatNum>13,854</StatNum>件<StatGap />掲載口コミ数：<StatNum $dark>56,963</StatNum>件
            </Stats>
          </Masthead>
          <Nav>
            <span>充電スタンド検索</span><span>チェーン店一覧</span><span>メーカー一覧</span><span>地図</span><span>ブログ</span>
          </Nav>
          <LoginRow><Login>ログイン</Login></LoginRow>
          <Intro>
            EVsmartは、電気自動車（EV）またはプラグインハイブリッド自動車（PHEV）ユーザー向けの、普通・急速充電器検索サイトです。現在地周辺、あるいは目<br />
            的地付近に存在する充電スポットを『車種を指定して』検索できます。口コミ情報も続々追加中！スマホ版やアプリ版もあります。
          </Intro>
          <Heading>
            <H2>電気自動車の普通･急速充電器スタンド検索</H2>
            <H2Sub>全国18,584箇所の充電器スタンドが検索できます！</H2Sub>
          </Heading>
          <Panels>
            <Left>
              <MapPanel>
                <JapanMap />
                <MapTitle>都道府県<MapThin>から探す</MapThin></MapTitle>
                {groups.map(gr => (
                  <Group key={gr.items[0]} $x={gr.x} $y={gr.y} $cols={gr.cols}>
                    {gr.items.map((it, i) => (
                      <Pref key={it} $place={i === gr.items.length - 1 ? gr.last : undefined}>{it}</Pref>
                    ))}
                  </Group>
                ))}
                {labels.map(([t, x, yy]) => <RegionLabel key={t} $x={x} $y={yy}>{t}</RegionLabel>)}
              </MapPanel>
              <NextPanel />
            </Left>
            <Side>
              <SideTitle>地名・観光スポット・<br />住所<TitleThin>で検索</TitleThin></SideTitle>
              <SearchBox />
              <Rule $mt={22} />
              <Opts $mt={20}>
                {['急速充電器のみ表示', '急速無料のみ表示', '高速道路上のみ表示', '24時間営業のみ表示'].map(t => (
                  <Opt key={t}><OptBox />{t}</Opt>
                ))}
              </Opts>
              <Rule $mt={19} />
              <DealerTitle>ディーラー</DealerTitle>
              <Opts $mt={19}>
                {['三菱ディーラーを表示', '日産ディーラーを表示'].map(t => (
                  <Opt key={t}><OptBox $on><Check size={18} strokeWidth={3} /></OptBox>{t}</Opt>
                ))}
              </Opts>
            </Side>
          </Panels>
        </Page>
        <PageBar><PageThumb /></PageBar>
        <Dev>
          <DevTabs />
          <DevTools />
          <DevFilter />
          <Overview>
            {ticks.map((t, i) => <Tick key={t} $w={i === 0 ? 69.6 : 69.4}>{t}</Tick>)}
            <OverviewArt />
          </Overview>
          <HeadRow>
            {heads.map(h => <HeadCell key={h}>{h}</HeadCell>)}
            <HeadCell>Waterfall<SortArrow /></HeadCell>
          </HeadRow>
          <TableWrap>
            <Rows>
              {data.map((r, i) => (
                <Row key={i} $alt={i % 2 === 0} $short={i === 0} $err={r.e}>
                  <NameCell><FileIcon k={r.ic} /><NameText>{r.n}</NameText></NameCell>
                  <TCell $gray={r.sg}>{r.s}</TCell>
                  <TCell>{r.t}</TCell>
                  {r.il ? <TCell $gray>{r.i}</TCell> : <TCell $link $err={r.e}>{r.i}</TCell>}
                  <TCell $right $gray={r.zg}>{r.z}</TCell>
                  <TCell $right>{r.m}</TCell>
                  <Waterfall>
                    {r.w.map(([x, w, c]) => <Bar key={x} style={{ left: x - 1753, width: w, background: c }} />)}
                  </Waterfall>
                </Row>
              ))}
            </Rows>
            <DevScroll><ArrowUp /><ThumbDev /><ArrowDown /></DevScroll>
          </TableWrap>
        </Dev>
      </Main>
    </>
  );
}
